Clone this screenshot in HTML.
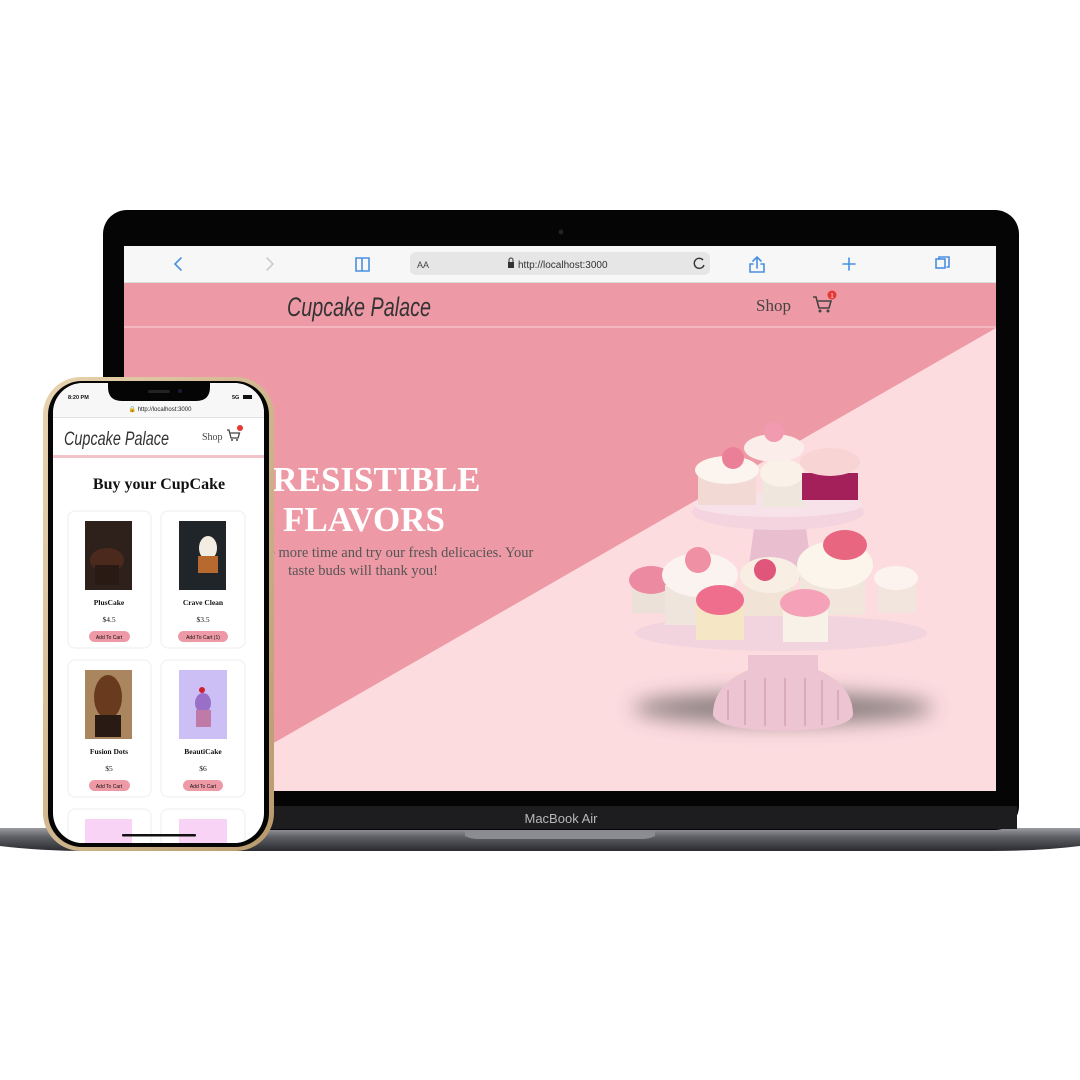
<!DOCTYPE html>
<html><head><meta charset="utf-8"><style>
html,body{margin:0;padding:0;background:#fff;width:1080px;height:1080px;overflow:hidden;font-family:"Liberation Serif",serif}
svg{position:absolute;left:0;top:0}
</style></head><body>
<svg width="1080" height="1080" viewBox="0 0 1080 1080">
<defs>
<linearGradient id="base" x1="0" y1="0" x2="0" y2="1"><stop offset="0" stop-color="#9a9ca2"/><stop offset=".4" stop-color="#5d5f65"/><stop offset="1" stop-color="#2a2b2f"/></linearGradient>
<linearGradient id="gold" x1="0" y1="0" x2="1" y2="1"><stop offset="0" stop-color="#e8d3b0"/><stop offset="1" stop-color="#b89a6c"/></linearGradient>
<filter id="bl" x="-50%" y="-200%" width="200%" height="500%"><feGaussianBlur stdDeviation="10"/></filter>
<clipPath id="scr"><rect x="124" y="246" width="872" height="545"/></clipPath>
<clipPath id="ph"><rect x="53" y="383" width="211" height="460" rx="30"/></clipPath>
</defs>
<path d="M0 828 H1080 V846 Q1040 851 990 851 H90 Q40 851 0 846Z" fill="url(#base)"/>
<path d="M465 828 H655 V836 Q650 839 640 839 H480 Q470 839 465 836Z" fill="#8a8c92"/>
<rect x="103" y="210" width="916" height="620" rx="24" fill="#050505"/>
<rect x="105" y="806" width="912" height="23" fill="#1d1d1f"/>
<text x="561" y="823" font-family="Liberation Sans,sans-serif" font-size="13" fill="#b8b8b8" text-anchor="middle">MacBook Air</text>
<circle cx="561" cy="232" r="2.5" fill="#222"/>
<g clip-path="url(#scr)">
<rect x="124" y="246" width="872" height="545" fill="#fddce0"/>
<rect x="124" y="246" width="872" height="37" fill="#f7f7f7"/>
<rect x="124" y="282" width="872" height="1" fill="#ddd"/>
<rect x="124" y="283" width="872" height="43" fill="#ee9aa6"/>
<rect x="124" y="326" width="872" height="2" fill="#f4b7bf"/>
<polygon points="124,328 996,328 190,791 124,791" fill="#ee9aa6"/>
<g stroke="#4a90e2" stroke-width="1.6" fill="none" stroke-linecap="round">
<path d="M181 258 L175 264 L181 270"/>
<path d="M267 258 L273 264 L267 270" stroke="#ccc"/>
<path d="M356 258 h6 v13 h-6z M362 258 h7 v13 h-7z"/>
<path d="M757 258 v10 M753 261 l4 -4 l4 4 M753 264 h-3 v8 h14 v-8 h-3"/>
<path d="M849 258 v12 M843 264 h12"/>
<rect x="936" y="259" width="9" height="9"/><path d="M939 259 v-2 h10 v10 h-2"/>
</g>
<rect x="410" y="252" width="300" height="23" rx="6" fill="#e6e6e6"/>
<text x="417" y="268" font-family="Liberation Sans,sans-serif" font-size="9" fill="#444">AA</text>
<rect x="508" y="262" width="6" height="6" fill="#333"/><path d="M509 262 v-2 a2 2 0 0 1 4 0 v2" stroke="#333" fill="none"/>
<text x="518" y="268" font-family="Liberation Sans,sans-serif" font-size="10" fill="#333">http://localhost:3000</text>
<path d="M703 260 a5 5 0 1 0 1 5" stroke="#333" stroke-width="1.4" fill="none"/>
<text x="287" y="316" font-family="Liberation Sans Narrow,Liberation Sans,sans-serif" font-size="27" font-weight="300" font-style="italic" fill="#333" textLength="144" lengthAdjust="spacingAndGlyphs">Cupcake Palace</text>
<text x="756" y="311" font-size="17" fill="#444">Shop</text>
<path d="M813 297 h3 l3 11 h10 l2 -7 h-13" stroke="#444" stroke-width="1.6" fill="none"/><circle cx="820" cy="311" r="1.5" fill="#444"/><circle cx="828" cy="311" r="1.5" fill="#444"/>
<circle cx="832" cy="295" r="4.5" fill="#e53935"/><text x="832" y="298" font-size="7" fill="#fff" text-anchor="middle">1</text>
<text x="357" y="491" font-size="35" font-weight="bold" fill="#fff" text-anchor="middle">IRRESISTIBLE</text>
<text x="364" y="531" font-size="35" font-weight="bold" fill="#fff" text-anchor="middle">FLAVORS</text>
<text x="370" y="557" font-size="14.5" fill="#555" text-anchor="middle">Take a little more time and try our fresh delicacies. Your</text>
<text x="363" y="575" font-size="14.5" fill="#555" text-anchor="middle">taste buds will thank you!</text>
<ellipse cx="783" cy="708" rx="150" ry="16" fill="#444" opacity=".6" filter="url(#bl)"/>
<path d="M748 655 h70 v15 q35 15 35 45 q-5 15 -70 16 q-65 -1 -70 -16 q0 -30 35 -45z" fill="#ecc4d2"/>
<path d="M728 690 v30 M745 680 v45 M765 678 v48 M785 678 v48 M805 678 v48 M822 680 v45 M838 690 v30" stroke="#dcaabd" stroke-width="2"/>
<ellipse cx="781" cy="633" rx="146" ry="18" fill="#f2d4de"/>
<path d="M755 520 h50 l8 60 h-66z" fill="#e9bfcf"/>
<ellipse cx="778" cy="512" rx="86" ry="18" fill="#f3d4df"/>
<ellipse cx="778" cy="505" rx="84" ry="12" fill="#f8e2ea"/>
<g>
<rect x="632" y="585" width="38" height="28" fill="#ece1d8"/><ellipse cx="651" cy="580" rx="22" ry="14" fill="#ec8aa2"/>
<rect x="665" y="585" width="70" height="40" fill="#efe5dc"/><ellipse cx="700" cy="575" rx="38" ry="22" fill="#fbf3f0"/><circle cx="698" cy="560" r="13" fill="#f090a4"/>
<rect x="745" y="580" width="50" height="36" fill="#f1e4d6"/><ellipse cx="770" cy="575" rx="30" ry="18" fill="#f8eee4"/><circle cx="765" cy="570" r="11" fill="#e0557a"/>
<rect x="800" y="575" width="65" height="40" fill="#f2e5dc"/><ellipse cx="835" cy="565" rx="38" ry="24" fill="#fbf5ec"/>
<rect x="878" y="585" width="38" height="28" fill="#f1e5de"/><ellipse cx="896" cy="578" rx="22" ry="12" fill="#fcf3ef"/>
<ellipse cx="845" cy="545" rx="22" ry="15" fill="#e8667f"/>
<rect x="696" y="605" width="48" height="35" fill="#f5e6c6"/><ellipse cx="720" cy="600" rx="24" ry="15" fill="#ef6e8e"/>
<rect x="783" y="610" width="45" height="32" fill="#f8f1e8"/><ellipse cx="805" cy="603" rx="25" ry="14" fill="#f5a1b8"/>
</g>
<g>
<rect x="698" y="475" width="58" height="30" fill="#f2d9d3"/><ellipse cx="727" cy="470" rx="32" ry="14" fill="#fcf4ee"/><circle cx="733" cy="458" r="11" fill="#ec7f98"/>
<rect x="762" y="480" width="42" height="27" fill="#efe6dd"/><ellipse cx="782" cy="473" rx="22" ry="14" fill="#faf2e8"/>
<ellipse cx="774" cy="448" rx="30" ry="14" fill="#fbeeea"/><circle cx="774" cy="432" r="10" fill="#f29ab0"/>
<rect x="802" y="473" width="56" height="27" fill="#a4205a"/><ellipse cx="830" cy="462" rx="30" ry="14" fill="#f8d5d4"/>
</g>
</g>
<rect x="43" y="377" width="231" height="474" rx="38" fill="url(#gold)"/>
<rect x="48" y="381" width="221" height="466" rx="34" fill="#050505"/>
<g clip-path="url(#ph)">
<rect x="53" y="383" width="211" height="460" fill="#fff"/>
<rect x="53" y="383" width="211" height="35" fill="#f7f7f7"/>
<text x="68" y="399" font-family="Liberation Sans,sans-serif" font-size="5.5" font-weight="bold" fill="#111">8:20 PM</text>
<text x="232" y="399" font-family="Liberation Sans,sans-serif" font-size="5.5" font-weight="bold" fill="#111">5G</text>
<rect x="243" y="395" width="9" height="4" fill="#111"/>
<text x="160" y="411" font-family="Liberation Sans,sans-serif" font-size="6" fill="#222" text-anchor="middle">🔒 http://localhost:3000</text>
<rect x="53" y="417" width="211" height="1" fill="#e2e2e2"/>
<text x="64" y="445" font-family="Liberation Sans Narrow,Liberation Sans,sans-serif" font-size="19" font-style="italic" fill="#333" textLength="105" lengthAdjust="spacingAndGlyphs">Cupcake Palace</text>
<text x="202" y="440" font-size="10" fill="#444">Shop</text>
<path d="M227 430 h2 l2 8 h7 l1.5 -5 h-9" stroke="#444" stroke-width="1.3" fill="none"/><circle cx="232" cy="440" r="1" fill="#444"/><circle cx="237" cy="440" r="1" fill="#444"/>
<circle cx="240" cy="428" r="3" fill="#e53935"/>
<rect x="53" y="455" width="211" height="3" fill="#f3c3ca"/>
<text x="159" y="489" font-size="16" font-weight="bold" fill="#111" text-anchor="middle">Buy your CupCake</text>
<g font-size="7.5" text-anchor="middle" fill="#111">
<rect x="68" y="511" width="83" height="137" rx="7" fill="#fff" stroke="#eee"/>
<rect x="85" y="521" width="47" height="69" fill="#2e211c"/><ellipse cx="107" cy="560" rx="17" ry="12" fill="#4b2a1d"/><rect x="95" y="565" width="24" height="20" fill="#2a1a14"/>
<text x="109" y="605" font-weight="bold">PlusCake</text><text x="109" y="622">$4.5</text>
<rect x="89" y="631" width="41" height="11" rx="5.5" fill="#ee9aa6"/><text x="109" y="639" font-family="Liberation Sans,sans-serif" font-size="5">Add To Cart</text>
<rect x="161" y="511" width="84" height="137" rx="7" fill="#fff" stroke="#eee"/>
<rect x="179" y="521" width="47" height="69" fill="#1f2528"/><ellipse cx="208" cy="548" rx="9" ry="12" fill="#f3ece2"/><rect x="198" y="556" width="20" height="17" fill="#b86a2e"/>
<text x="203" y="605" font-weight="bold">Crave Clean</text><text x="203" y="622">$3.5</text>
<rect x="178" y="631" width="50" height="11" rx="5.5" fill="#ee9aa6"/><text x="203" y="639" font-family="Liberation Sans,sans-serif" font-size="5">Add To Cart (1)</text>
<rect x="68" y="660" width="83" height="137" rx="7" fill="#fff" stroke="#eee"/>
<rect x="85" y="670" width="47" height="69" fill="#a9865e"/><ellipse cx="108" cy="697" rx="14" ry="22" fill="#6a3a1e"/><rect x="95" y="715" width="26" height="22" fill="#2a1a14"/>
<text x="109" y="754" font-weight="bold">Fusion Dots</text><text x="109" y="771">$5</text>
<rect x="89" y="780" width="41" height="11" rx="5.5" fill="#ee9aa6"/><text x="109" y="788" font-family="Liberation Sans,sans-serif" font-size="5">Add To Cart</text>
<rect x="161" y="660" width="84" height="137" rx="7" fill="#fff" stroke="#eee"/>
<rect x="179" y="670" width="48" height="69" fill="#cbbff5"/><ellipse cx="203" cy="703" rx="8" ry="10" fill="#9a6fc7"/><rect x="196" y="710" width="15" height="17" fill="#c07aa8"/><circle cx="202" cy="690" r="3" fill="#d2202f"/>
<text x="203" y="754" font-weight="bold">BeautiCake</text><text x="203" y="771">$6</text>
<rect x="183" y="780" width="40" height="11" rx="5.5" fill="#ee9aa6"/><text x="203" y="788" font-family="Liberation Sans,sans-serif" font-size="5">Add To Cart</text>
<rect x="68" y="809" width="83" height="60" rx="7" fill="#fff" stroke="#eee"/><rect x="85" y="819" width="47" height="40" fill="#f8d3f5"/>
<rect x="161" y="809" width="84" height="60" rx="7" fill="#fff" stroke="#eee"/><rect x="179" y="819" width="48" height="40" fill="#f8d3f5"/>
</g>
<rect x="122" y="834" width="74" height="2.5" rx="1" fill="#111"/>
</g>
<path d="M108 381 h102 v6 q0 14 -14 14 h-74 q-14 0 -14 -14z" fill="#050505"/>
<rect x="148" y="390" width="22" height="3" rx="1.5" fill="#222"/><circle cx="180" cy="391" r="2" fill="#1a1a3a"/>
</svg>
</body></html>
